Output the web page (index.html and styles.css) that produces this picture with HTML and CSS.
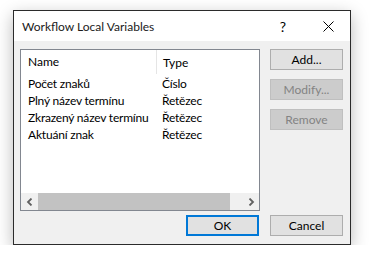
FILE: index.html
```html
<!DOCTYPE html>
<html lang="cs">
<head>
    <meta charset="UTF-8">
    <meta name="viewport" content="width=device-width, initial-scale=1.0">
    <title>Workflow Local Variables</title>
    <link rel="stylesheet" href="styles.css">
</head>
<body>

    <div class="dialog">
        <div class="titlebar">
            <span class="title">Workflow Local Variables</span>
            <span class="help">?</span>
            <span class="close">
                <svg width="11" height="11" viewBox="0 0 11 11">
                    <path d="M0.5 0.5 L10.5 10.5 M10.5 0.5 L0.5 10.5" stroke="#000" stroke-width="1" fill="none"/>
                </svg>
            </span>
        </div>

        <div class="client">
            <div class="listbox">
                <div class="list-header">
                    <div class="col-name">Name</div>
                    <div class="col-type">Type</div>
                </div>
                <div class="list-rows">
                    <div class="row"><div class="col-name">Počet znaků</div><div class="col-type">Číslo</div></div>
                    <div class="row"><div class="col-name">Plný název termínu</div><div class="col-type">Řetězec</div></div>
                    <div class="row"><div class="col-name">Zkrazený název termínu</div><div class="col-type">Řetězec</div></div>
                    <div class="row"><div class="col-name">Aktuání znak</div><div class="col-type">Řetězec</div></div>
                </div>
                <div class="hscroll">
                    <span class="arrow">
                        <svg width="8" height="8" viewBox="0 0 8 8"><path d="M5.5 0.5 L2 4 L5.5 7.5" stroke="#606060" stroke-width="1.8" fill="none"/></svg>
                    </span>
                    <div class="track"><div class="thumb"></div></div>
                    <span class="arrow">
                        <svg width="8" height="8" viewBox="0 0 8 8"><path d="M2.5 0.5 L6 4 L2.5 7.5" stroke="#606060" stroke-width="1.8" fill="none"/></svg>
                    </span>
                </div>
            </div>

            <div class="side-buttons">
                <button class="btn">Add...</button>
                <button class="btn" disabled>Modify...</button>
                <button class="btn" disabled>Remove</button>
            </div>

            <button class="btn btn-default">OK</button>
            <button class="btn">Cancel</button>
        </div>
    </div>

</body>
</html>
```

FILE: styles.css
```css
body {
    margin: 0;
    background-color: #ffffff;
    font-family: Lato, "Noto Sans", sans-serif;
    font-size: 12px;
    color: #000000;
}
.dialog {
    margin: 10px 0 0 13px;
    width: 338px;
    height: 235px;
    box-sizing: border-box;
    border: 1px solid #2b2b2b;
    background-color: #f0f0f0;
    box-shadow: 0 5px 16px rgba(0, 0, 0, 0.28);
    display: flex;
    flex-direction: column;
}
.titlebar {
    height: 30px;
    background-color: #ffffff;
    display: flex;
    align-items: center;
    padding-left: 8px;
}
.titlebar .title {
    flex: 1;
    font-size: 12px;
    color: #1a1a1a;
}
.titlebar .help {
    width: 20px;
    font-size: 14px;
    margin-right: 12px;
    text-align: center;
}
.titlebar .close {
    width: 46px;
    display: flex;
    justify-content: center;
    margin-right: -1px;
}
.client {
    flex: 1;
    display: grid;
    grid-template-columns: 240px 73px;
    grid-template-rows: 162px 21px;
    column-gap: 10px;
    row-gap: 4px;
    padding: 8px 7px 8px 6px;
}
/* List view */
.listbox {
    border: 1px solid #828790;
    background-color: #ffffff;
    display: flex;
    flex-direction: column;
}
.list-header,
.row {
    display: flex;
}
.list-header {
    height: 24px;
    align-items: center;
}
.list-header .col-name {
    border-right: 1px solid #e5e5e5;
    height: 24px;
    line-height: 24px;
}
.col-name {
    width: 128px;
    padding-left: 7px;
}
.col-type {
    padding-left: 6px;
}
.list-rows {
    flex: 1;
    padding-top: 1px;
}
.row {
    height: 17px;
    line-height: 17px;
    white-space: nowrap;
    letter-spacing: -0.2px;
}
.hscroll {
    height: 17px;
    background-color: #f0f0f0;
    display: flex;
}
.hscroll .arrow {
    width: 17px;
    display: flex;
    align-items: center;
    justify-content: center;
}
.hscroll .track {
    flex: 1;
    display: flex;
}
.hscroll .thumb {
    width: 192px;
    background-color: #c2c2c2;
}
/* Buttons */
.side-buttons {
    display: flex;
    flex-direction: column;
    gap: 9px;
}
.btn {
    height: 21px;
    width: 73px;
    padding: 0;
    font-family: inherit;
    font-size: 12px;
    color: #000000;
    background-color: #e1e1e1;
    border: 1px solid #adadad;
    box-sizing: border-box;
}
.btn:disabled {
    background-color: #cccccc;
    border-color: #bfbfbf;
    color: #838383;
}
.btn-default {
    justify-self: end;
    margin-right: 1px;
    border: 2px solid #0078d7;
}
```
